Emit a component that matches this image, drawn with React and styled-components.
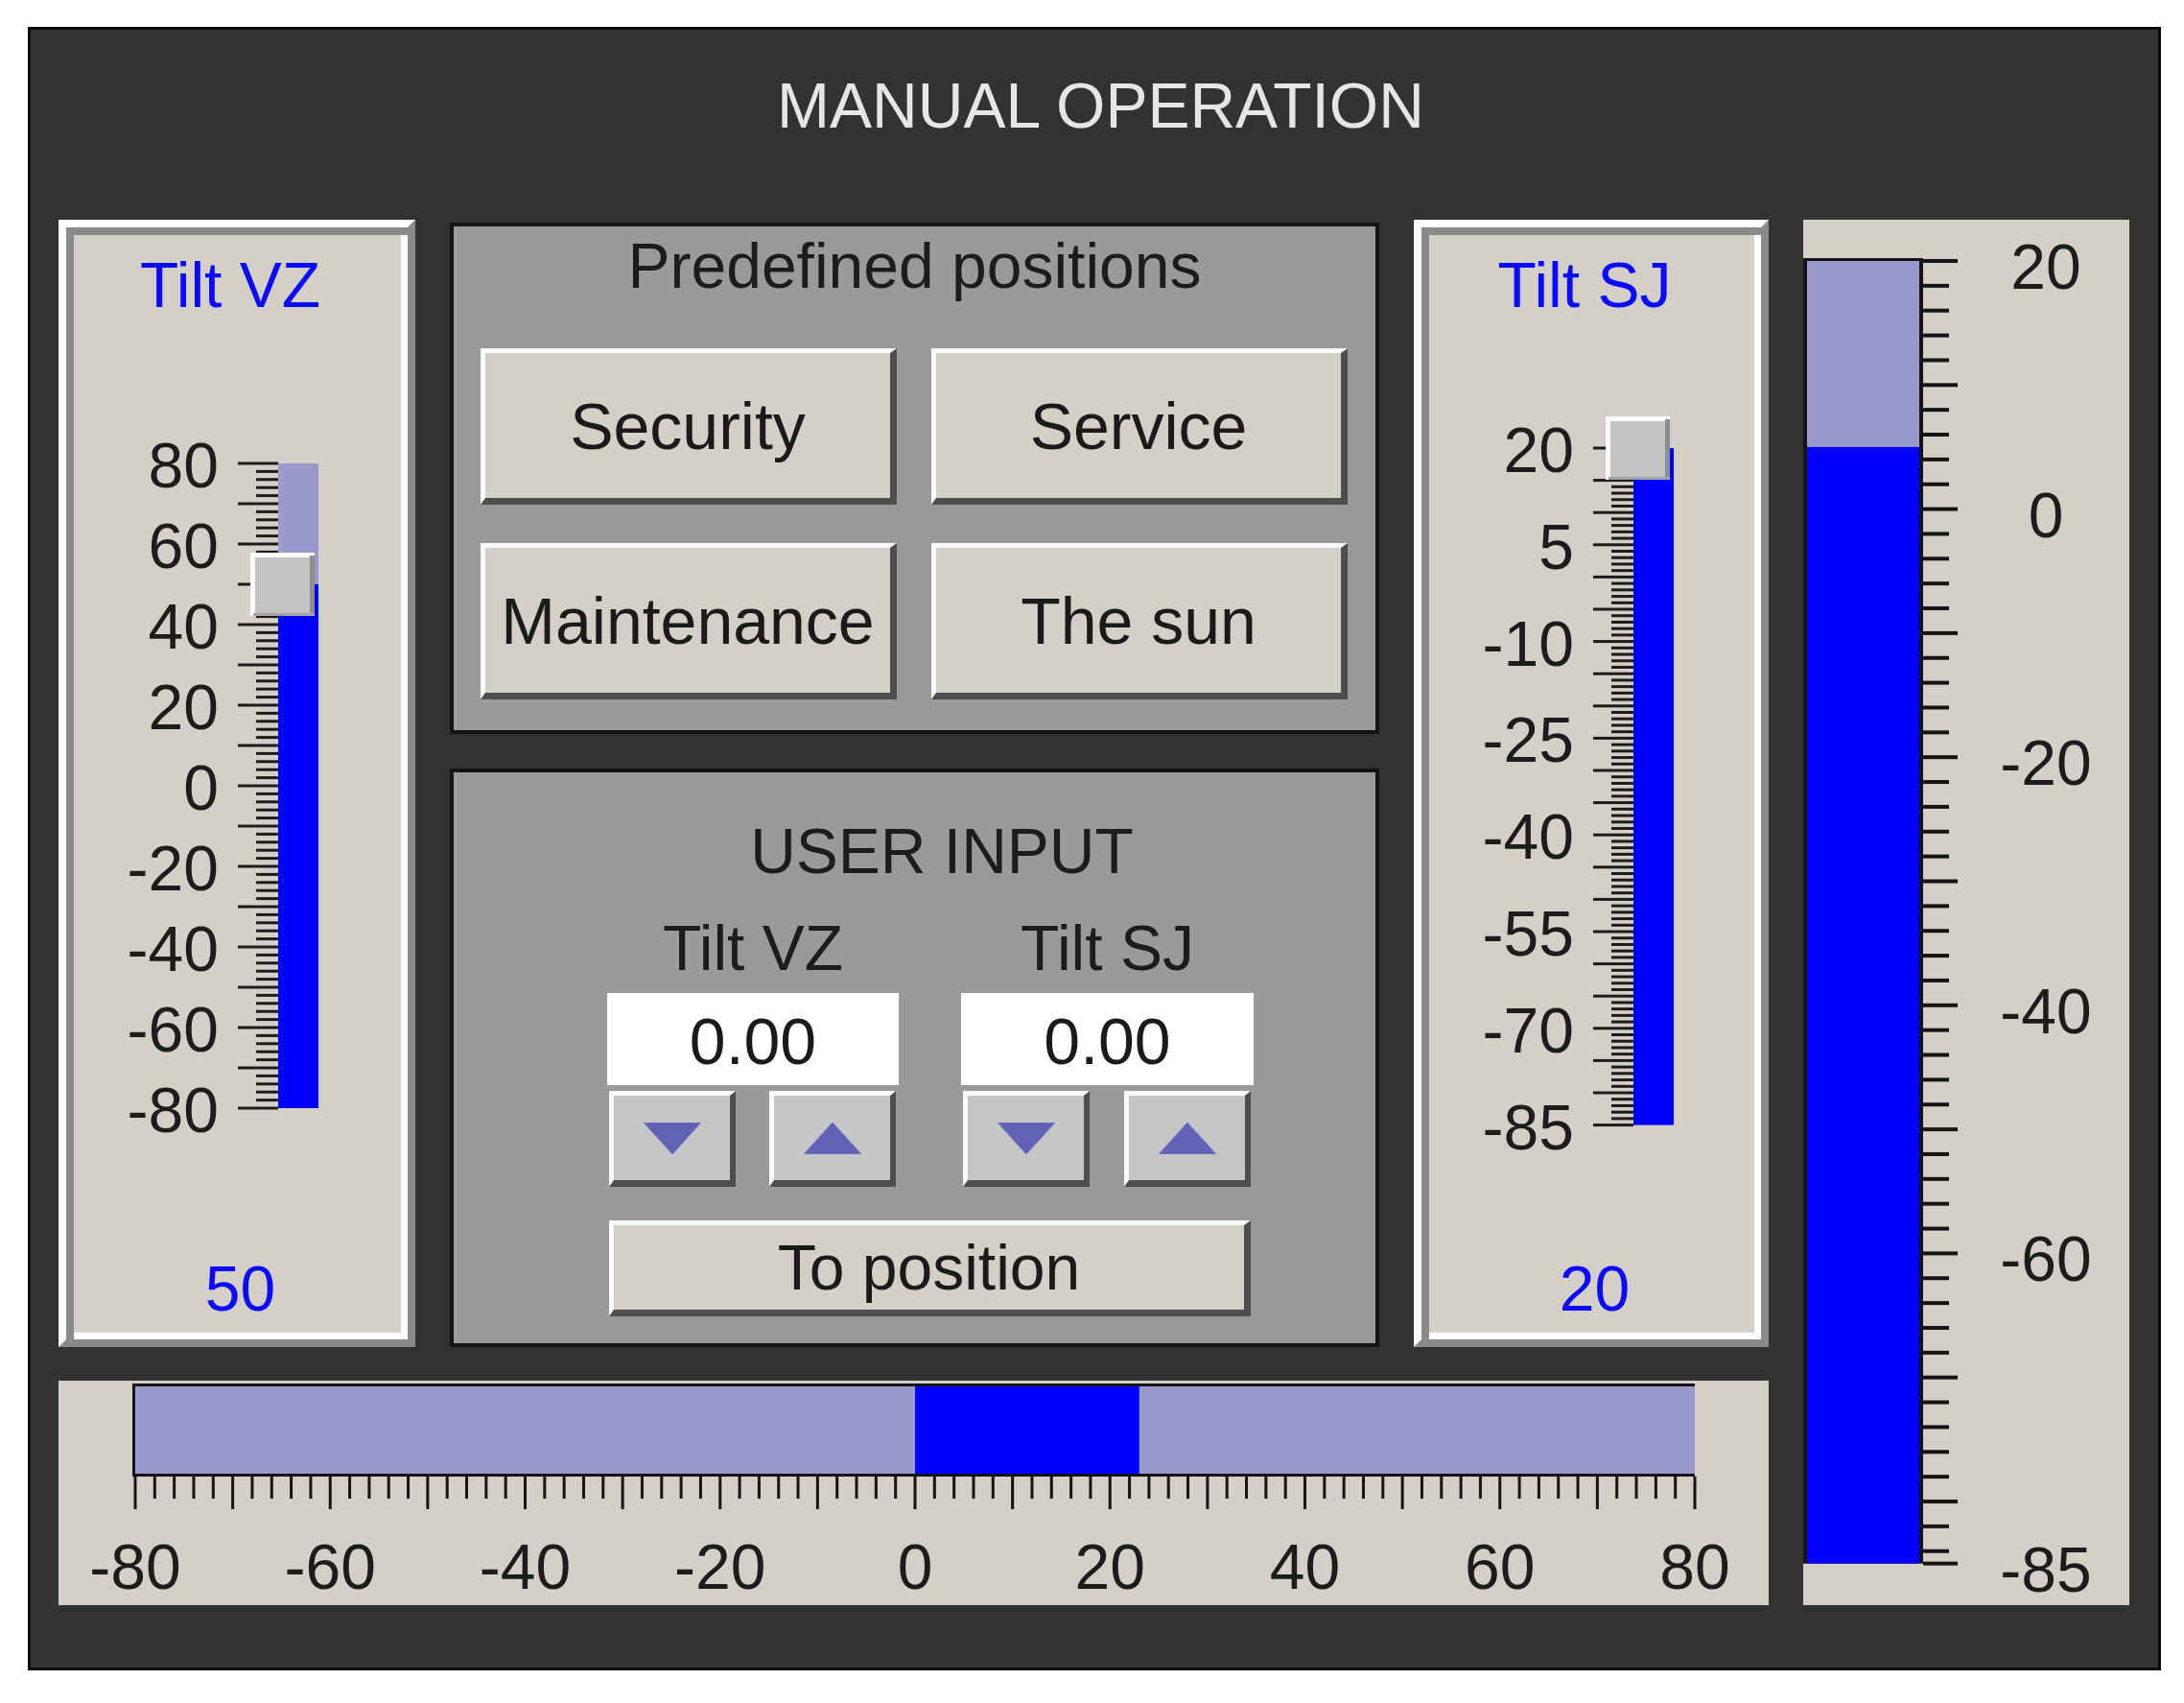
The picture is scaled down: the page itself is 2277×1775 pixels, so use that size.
import React from 'react';
import styled, { createGlobalStyle } from 'styled-components';

const GlobalStyle = createGlobalStyle`
  html, body {
    margin: 0;
    padding: 0;
    background: #ffffff;
  }
  body {
    font-family: "Liberation Sans", Arial, sans-serif;
  }
`;

const Page = styled.div`
  padding: 28px 0 0 29px;
`;

const Frame = styled.div`
  width: 2224px;
  box-sizing: border-box;
  background: #323232;
  border: 3px solid #0c0c0c;
  padding: 46px 0 65px 29px;
`;

const Title = styled.h1`
  margin: 0 0 86px;
  padding-right: 16px;
  font: 400 66px/66px "Liberation Sans", sans-serif;
  color: #e6e6e6;
  text-align: center;
`;

const Board = styled.div`
  display: grid;
  grid-template-columns: 372px 969px 370px 340px;
  grid-template-rows: 1175px 234px;
  column-gap: 36px;
  row-gap: 35px;
`;

const GaugePanel = styled.section`
  box-sizing: border-box;
  padding: 8px;
  background: #d4d0c8;
  border: 8px solid;
  border-color: #fcfcfc #8a8a8a #8a8a8a #fcfcfc;
  box-shadow: inset 8px 8px 0 #8a8a8a, inset -7px -7px 0 #fcfcfc;
  display: flex;
  flex-direction: column;
`;

const GaugeTitle = styled.div`
  margin-top: 19px;
  padding-right: 14px;
  font: 400 66px/66px "Liberation Sans", sans-serif;
  color: #0a0aff;
  text-align: center;
`;

const GaugeValue = styled.div`
  margin-top: 86px;
  padding-left: 7px;
  font: 400 66px/66px "Liberation Sans", sans-serif;
  color: #0a0aff;
  text-align: center;
`;

const ScaleSvg = styled.svg`
  display: block;
  flex: none;
  margin-top: ${(p) => p.$top || 0}px;
  text {
    font-family: "Liberation Sans", Arial, sans-serif;
    font-size: 66px;
    fill: #1c1c1c;
  }
`;

const FlatPanel = styled.section`
  background: #d4d0c8;
  grid-column: ${(p) => p.$col};
  grid-row: ${(p) => p.$row};
  overflow: hidden;
`;

const Middle = styled.div`
  display: flex;
  flex-direction: column;
  gap: 36px;
  padding-top: 3px;
`;

const GrayPanel = styled.section`
  box-sizing: border-box;
  background: #9a9a9a;
  border: 4px solid #141414;
  height: ${(p) => p.$height || 'auto'};
  flex: ${(p) => (p.$grow ? 1 : 'none')};
`;

const PanelTitle = styled.div`
  margin-top: ${(p) => p.$top}px;
  padding-left: ${(p) => p.$shift || 0}px;
  font: 400 66px/66px "Liberation Sans", sans-serif;
  color: #1c1c1c;
  text-align: center;
`;

const PresetGrid = styled.div`
  margin-top: 53px;
  padding-left: 28px;
  display: grid;
  grid-template-columns: 434px 434px;
  grid-auto-rows: 163px;
  column-gap: 36px;
  row-gap: 40px;
`;

const Bevel = styled.button`
  box-sizing: border-box;
  margin: 0;
  padding: 0;
  background: ${(p) => p.$fill || '#d4d0c8'};
  border-style: solid;
  border-width: 5px 7px 7px 5px;
  border-color: #fafafa #4e4e4e #4e4e4e #fafafa;
  font: 400 68px/68px "Liberation Sans", sans-serif;
  color: #1a1a1a;
  display: flex;
  align-items: center;
  justify-content: center;
`;

const InputArea = styled.div`
  width: 674px;
  margin-left: 160px;
`;

const InputColumns = styled.div`
  margin-top: 35px;
  display: grid;
  grid-template-columns: 304px 305px;
  column-gap: 65px;
`;

const InputLabel = styled.div`
  font: 400 66px/66px "Liberation Sans", sans-serif;
  color: #1c1c1c;
  text-align: center;
`;

const Field = styled.div`
  box-sizing: border-box;
  margin-top: 14px;
  height: 96px;
  padding-top: 4px;
  background: #ffffff;
  font: 400 68px/92px "Liberation Sans", sans-serif;
  color: #1a1a1a;
  text-align: center;
`;

const SpinRow = styled.div`
  margin-top: 6px;
  padding: 0 3px 0 2px;
  display: flex;
  justify-content: space-between;
`;

const SpinButton = styled(Bevel)`
  width: 132px;
  height: 100px;
  border-width: 5px 6px 7px 5px;
`;

const ActionButton = styled(Bevel)`
  width: 669px;
  height: 100px;
  margin: 35px 0 0 2px;
  font-size: 66px;
`;

const Arrow = ({ up }) => (
  <svg width="60" height="33" viewBox="0 0 60 33">
    <polygon
      points={up ? '30,0 60,33 0,33' : '0,0 60,0 30,33'}
      fill="#6262b4"
      stroke="#7a7ad0"
      strokeWidth="1"
    />
  </svg>
);

// vertical gauge with slider thumb (left and middle-right panels)
const VScale = ({ max, min, value, top, unit, minor, major, labels }) => {
  const yOf = (v) => top + (max - v) * unit;
  const n = Math.round((max - min) / minor);
  const ticks = Array.from({ length: n + 1 }, (_, i) => max - i * minor);
  const yTop = yOf(max);
  const yv = yOf(value);
  const yBot = yOf(min);
  return (
    <ScaleSvg width="340" height="800" viewBox="0 0 340 800" $top={94}>
      <rect x="213" y={yTop} width="42" height={yv - yTop} fill="#9999cc" />
      <rect x="213" y={yv} width="42" height={yBot - yv} fill="#0000ff" />
      {ticks.map((v) => {
        const long = v % major === 0;
        return (
          <rect
            key={v}
            x={long ? 171 : 190}
            y={yOf(v) - 1.5}
            width={long ? 42 : 23}
            height="3"
            fill="#1c1c1c"
          />
        );
      })}
      {labels.map((v) => (
        <text key={v} x="151" y={yOf(v) + 25} textAnchor="end">
          {v}
        </text>
      ))}
      <g transform={`translate(184 ${yv - 33})`}>
        <rect width="67" height="66" fill="#c3c3c3" />
        <rect width="67" height="5" fill="#fbfbfb" />
        <rect width="5" height="66" fill="#fbfbfb" />
        <rect x="62" y="3" width="5" height="63" fill="#8e8e8e" />
        <rect x="3" y="63" width="64" height="3" fill="#a4a4a4" />
      </g>
    </ScaleSvg>
  );
};

const Gauge = ({ title, value, ...scale }) => (
  <GaugePanel>
    <GaugeTitle>{title}</GaugeTitle>
    <VScale value={value} {...scale} />
    <GaugeValue>{value}</GaugeValue>
  </GaugePanel>
);

// tall bar on the far right
const TallBar = ({ max, min, value }) => {
  const top = 43;
  const unit = 12.93;
  const yOf = (v) => top + (max - v) * unit;
  const ticks = [];
  for (let v = max; v > min; v -= 2) ticks.push(v);
  ticks.push(min);
  const yv = yOf(value);
  const yBot = yOf(min);
  return (
    <ScaleSvg width="340" height="1444" viewBox="0 0 340 1444">
      <rect x="0" y={top - 3} width="125" height={yBot - top + 3} fill="#141414" />
      <rect x="4" y={top} width="117" height={yv - top} fill="#9999cc" />
      <rect x="4" y={yv} width="117" height={yBot - yv} fill="#0000ff" />
      {ticks.map((v) => {
        const long = v % 10 === 0 || v === min;
        return (
          <rect key={v} x="125" y={yOf(v) - 2} width={long ? 36 : 27} height="4" fill="#141414" />
        );
      })}
      {[20, 0, -20, -40, -60, -85].map((v) => (
        <text key={v} x="253" y={yOf(v) + 29} textAnchor="middle">
          {v}
        </text>
      ))}
    </ScaleSvg>
  );
};

// horizontal bar along the bottom
const WideBar = ({ min, max, value }) => {
  const x0 = 80;
  const unit = 10.1625;
  const xOf = (v) => x0 + (v - min) * unit;
  const ticks = [];
  for (let v = min; v <= max; v += 2) ticks.push(v);
  const labels = [];
  for (let v = min; v <= max; v += 20) labels.push(v);
  return (
    <ScaleSvg width="1783" height="234" viewBox="0 0 1783 234">
      <rect x="77" y="3" width={xOf(max) - 77} height="97" fill="#141414" />
      <rect x="80" y="6" width={xOf(max) - 80} height="91" fill="#9999cc" />
      <rect x={xOf(0)} y="6" width={value * unit} height="91" fill="#0000ff" />
      {ticks.map((v) => {
        const long = v % 10 === 0;
        return (
          <rect key={v} x={xOf(v) - 1.5} y="100" width="3" height={long ? 34 : 23} fill="#141414" />
        );
      })}
      {labels.map((v) => (
        <text key={v} x={xOf(v)} y="217" textAnchor="middle">
          {v}
        </text>
      ))}
    </ScaleSvg>
  );
};

const App = () => (
  <Page>
    <GlobalStyle />
    <Frame>
      <Title>MANUAL OPERATION</Title>
      <Board>
        <Gauge
          title="Tilt VZ"
          value={50}
          max={80}
          min={-80}
          top={59}
          unit={4.2}
          minor={2}
          major={10}
          labels={[80, 60, 40, 20, 0, -20, -40, -60, -80]}
        />
        <Middle>
          <GrayPanel $height="533px">
            <PanelTitle $top={8}>Predefined positions</PanelTitle>
            <PresetGrid>
              <Bevel>Security</Bevel>
              <Bevel>Service</Bevel>
              <Bevel>Maintenance</Bevel>
              <Bevel>The sun</Bevel>
            </PresetGrid>
          </GrayPanel>
          <GrayPanel $grow>
            <InputArea>
              <PanelTitle $top={49} $shift={24}>USER INPUT</PanelTitle>
              <InputColumns>
                {['Tilt VZ', 'Tilt SJ'].map((label) => (
                  <div key={label}>
                    <InputLabel>{label}</InputLabel>
                    <Field>0.00</Field>
                    <SpinRow>
                      <SpinButton $fill="#c6c6c6">
                        <Arrow />
                      </SpinButton>
                      <SpinButton $fill="#c6c6c6">
                        <Arrow up />
                      </SpinButton>
                    </SpinRow>
                  </div>
                ))}
              </InputColumns>
              <ActionButton>To position</ActionButton>
            </InputArea>
          </GrayPanel>
        </Middle>
        <Gauge
          title="Tilt SJ"
          value={20}
          max={20}
          min={-85}
          top={43}
          unit={6.72}
          minor={1}
          major={5}
          labels={[20, 5, -10, -25, -40, -55, -70, -85]}
        />
        <FlatPanel $col="4" $row="1 / span 2">
          <TallBar max={20} min={-85} value={5} />
        </FlatPanel>
        <FlatPanel $col="1 / span 3" $row="2">
          <WideBar min={-80} max={80} value={23} />
        </FlatPanel>
      </Board>
    </Frame>
  </Page>
);

export default App;
